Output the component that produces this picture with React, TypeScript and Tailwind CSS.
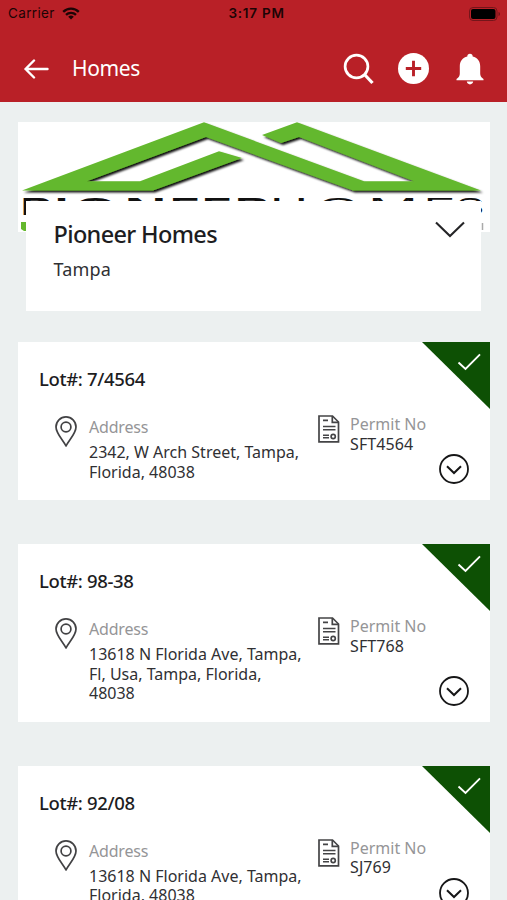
import React from 'react';

interface Lot {
  id: string;
  address: string[];
  permit: string;
}

const lots: Lot[] = [
  { id: '7/4564', address: ['2342, W Arch Street, Tampa,', 'Florida, 48038'], permit: 'SFT4564' },
  { id: '98-38', address: ['13618 N Florida Ave, Tampa,', 'Fl, Usa, Tampa, Florida,', '48038'], permit: 'SFT768' },
  { id: '92/08', address: ['13618 N Florida Ave, Tampa,', 'Florida, 48038'], permit: 'SJ769' },
];

// letter, left edge, advance width
const boldLetters: [string, number, number][] = [
  ['P', 20.5, 31], ['I', 54.5, 14], ['O', 75, 41], ['N', 124.5, 42], ['E', 170, 30], ['E', 202, 30], ['R', 235, 34],
];
const lightLetters: [string, number, number][] = [
  ['H', 270, 38], ['O', 318, 41], ['M', 368, 50], ['E', 424, 31], ['S', 456, 28],
];

const StatusBar = () => (
  <div className="grid h-[27px] grid-cols-3 items-center pl-2 pr-[6px] font-['Inter',sans-serif] text-[13.5px] text-[#1c0405]">
    <div className="flex items-center gap-[7px]">
      <span className="tracking-[0.35px]">Carrier</span>
      <svg width="18" height="13" viewBox="0 0 18 13" fill="none" stroke="currentColor" strokeWidth="2.3">
        <path d="M1.2 4.9a11 11 0 0 1 15.6 0" />
        <path d="M4 7.9a7 7 0 0 1 10 0" />
        <path d="M9 12.6 6.2 9.8a4 4 0 0 1 5.6 0Z" fill="currentColor" stroke="none" />
      </svg>
    </div>
    <span className="pl-1 text-center font-semibold tracking-[0.75px]">3:17 PM</span>
    <svg className="justify-self-end" width="32" height="14" viewBox="0 0 32 14">
      <rect x="0.5" y="0.5" width="27.5" height="13" rx="3.5" fill="none" stroke="#74151a" />
      <rect x="2" y="2" width="24.5" height="10" rx="2" fill="#000" />
      <path d="M29.5 5v4c1-.3 1.5-1 1.5-2s-.5-1.700-1.500-2Z" fill="#74151a" />
    </svg>
  </div>
);

const Header = () => (
  <header className="h-[102px] bg-[#b92027]">
    <StatusBar />
    <div className="flex h-[75px] items-center pl-6 pr-[23px] pt-[9px] text-white">
      <svg className="-mt-px" width="25" height="20" viewBox="0 0 25 20" fill="none" stroke="currentColor" strokeWidth="2.400" strokeLinecap="round" strokeLinejoin="round">
        <path d="M10 1.500 1.500 10l8.500 8.500M1.500 10H23.500" />
      </svg>
      <h1 className="-mt-[3px] ml-[23px] flex-1 text-[21px] leading-7 tracking-[-0.4px]">Homes</h1>
      <svg width="32" height="32" viewBox="0 0 32 32" fill="none" stroke="currentColor" strokeWidth="2.700">
        <circle cx="14.500" cy="13.500" r="11.400" />
        <path d="m22.500 21.500 8 8.500" strokeWidth="3.200" />
      </svg>
      <svg className="ml-[23px]" width="32" height="32" viewBox="0 0 32 32">
        <circle cx="16.500" cy="15.500" r="15.500" fill="#fff" />
        <path d="M16.500 7.800v15.400M8.800 15.500h15.400" stroke="#b92027" strokeWidth="2.900" />
      </svg>
      <svg className="ml-[27px]" width="28" height="32" viewBox="0 0 28 32" fill="currentColor">
        <path d="M14 .8c1.700 0 2.700 1 2.700 2.600 4.800 1.100 7.500 4.900 7.500 9.800v7.300c0 2.300.8 3.700 3.300 5.400v1.300H.5v-1.300c2.500-1.700 3.300-3.100 3.300-5.400v-7.300c0-4.900 2.700-8.700 7.500-9.800C11.300 1.800 12.300.8 14 .8Z" />
        <path d="M10.800 28.600h6.400c-.3 1.800-1.500 2.800-3.200 2.800s-2.900-1-3.200-2.800Z" />
      </svg>
    </div>
  </header>
);

// Builder logo, its lower part sits behind the name panel
const BuilderLogo = () => (
  <svg className="block bg-white" width="472" height="110" viewBox="18 122 472 110">
    <defs>
      <filter id="roof-shadow" x="-5%" y="-10%" width="110%" height="125%">
        <feDropShadow dx="2" dy="2" stdDeviation="1.300" floodColor="#000" floodOpacity="0.95" />
      </filter>
    </defs>
    <path
      filter="url(#roof-shadow)"
      fill="#64b82d"
      d="M22 190.500 204 122.300 364 181.300H414L299 137 281 143 262 135 297 122.300 481 190.500H353L206 137 87 181.300H140L219 151.200 242 158 153 190.500Z"
    />
    <g fill="#111" className="font-['Liberation_Sans',sans-serif]" fontSize="24.500">
      {boldLetters.map(([letter, x, width]) => (
        <text key={x} x={x} y="215" fontWeight="700" textLength={width} lengthAdjust="spacingAndGlyphs">{letter}</text>
      ))}
      {lightLetters.map(([letter, x, width]) => (
        <text key={x} x={x} y="215" textLength={width} lengthAdjust="spacingAndGlyphs">{letter}</text>
      ))}
    </g>
    <path d="M21 222h6v9h-3l-3-2Z" fill="#64b82d" />
    <path d="M482.500 223v7" stroke="#aaa" strokeWidth="1.500" />
  </svg>
);

const BuilderCard = () => (
  <section className="h-[189px]">
    <BuilderLogo />
    <div className="relative mx-2 -mt-[31px] mr-[9px] flex h-[110px] justify-between bg-white pl-[27.5px] pr-[15px] pt-[17px]">
      <div>
        <h2 className="text-[23.5px] font-medium leading-8 tracking-[-0.65px] text-[#1d1d1f]">Pioneer Homes</h2>
        <p className="mt-[7px] text-[18px] leading-6 tracking-[0.2px] text-[#303033]">Tampa</p>
      </div>
      <svg className="mt-[3px]" width="32" height="17" viewBox="0 0 32 17" fill="none" stroke="#252527" strokeWidth="2.100">
        <path d="m2 1.500 14 13.500 14-13.500" />
      </svg>
    </div>
  </section>
);

const PinIcon = () => (
  <svg width="22" height="31" viewBox="0 0 22 31" fill="none" stroke="#424244" strokeWidth="1.700" strokeLinejoin="round">
    <path d="M11 30C8.500 24.500 1 17.500 1 10.900a10 10 0 0 1 20 0C21 17.500 13.500 24.500 11 30Z" />
    <circle cx="11" cy="11" r="4.900" />
  </svg>
);

const PermitIcon = () => (
  <svg width="22" height="28" viewBox="0 0 22 28" fill="none" stroke="#444446" strokeWidth="1.700">
    <path d="M1 1h13.500l6 6v19.800H1Z" />
    <path d="M14.300 1v6.300h6.200M5 5.300h5" />
    <path d="M5 11.500h12.500M5 14.800h12.500M5 20.300h6M5 22.800h6" strokeWidth="1.500" />
    <circle cx="15.200" cy="21.500" r="2.100" />
  </svg>
);

const LotCard: React.FC<{ lot: Lot }> = ({ lot }) => (
  <article className="relative shrink-0 bg-white pb-[18px] pt-[25px]">
    <h3 className="pl-[21px] text-[18.5px] font-medium leading-6 tracking-[-0.35px] text-[#1d1d1f]">Lot#: {lot.id}</h3>
    <div className="mt-[22px] flex items-start pl-[37px]">
      <div className="mt-[3px] shrink-0">
        <PinIcon />
      </div>
      <div className="ml-3 w-[229px] shrink-0 whitespace-nowrap text-[16px]">
        <p className="mt-[2px] leading-6 tracking-[-0.2px] text-[#959597]">Address</p>
        <div className="mt-1 leading-[19.5px] text-[#303033]">
          {lot.address.map((line) => (
            <p key={line}>{line}</p>
          ))}
        </div>
      </div>
      <div className="mt-[2px] shrink-0">
        <PermitIcon />
      </div>
      <div className="ml-[10px] text-[16px] leading-[19.5px]">
        <p className="mt-[2px] text-[#959597]">Permit No</p>
        <p className="tracking-[0.1px] text-[#303033]">{lot.permit}</p>
      </div>
    </div>
    <svg className="absolute right-0 top-0" width="68" height="67" viewBox="0 0 68 67">
      <path d="M0 0h68v67Z" fill="#0d5004" />
      <path d="m36.500 20.500 7 6.500L58 12.300" fill="none" stroke="#fff" strokeWidth="1.900" />
    </svg>
    <svg className="absolute bottom-[16px] right-[21px]" width="30" height="30" viewBox="0 0 30 30" fill="none" stroke="#161617" strokeWidth="1.800">
      <circle cx="15" cy="15" r="14" />
      <path d="m8 12.200 7 6.800 7-6.800" strokeWidth="2" />
    </svg>
  </article>
);

export default function App() {
  return (
    <div className="h-[900px] w-[507px] overflow-hidden bg-[#ecf0f0] font-['Noto_Sans',sans-serif]">
      <Header />
      <main className="pl-[18px] pr-[17px] pt-5">
        <BuilderCard />
        <div className="mt-[31px] flex flex-col gap-11">
          {lots.map((lot) => (
            <LotCard key={lot.id} lot={lot} />
          ))}
        </div>
      </main>
    </div>
  );
}
